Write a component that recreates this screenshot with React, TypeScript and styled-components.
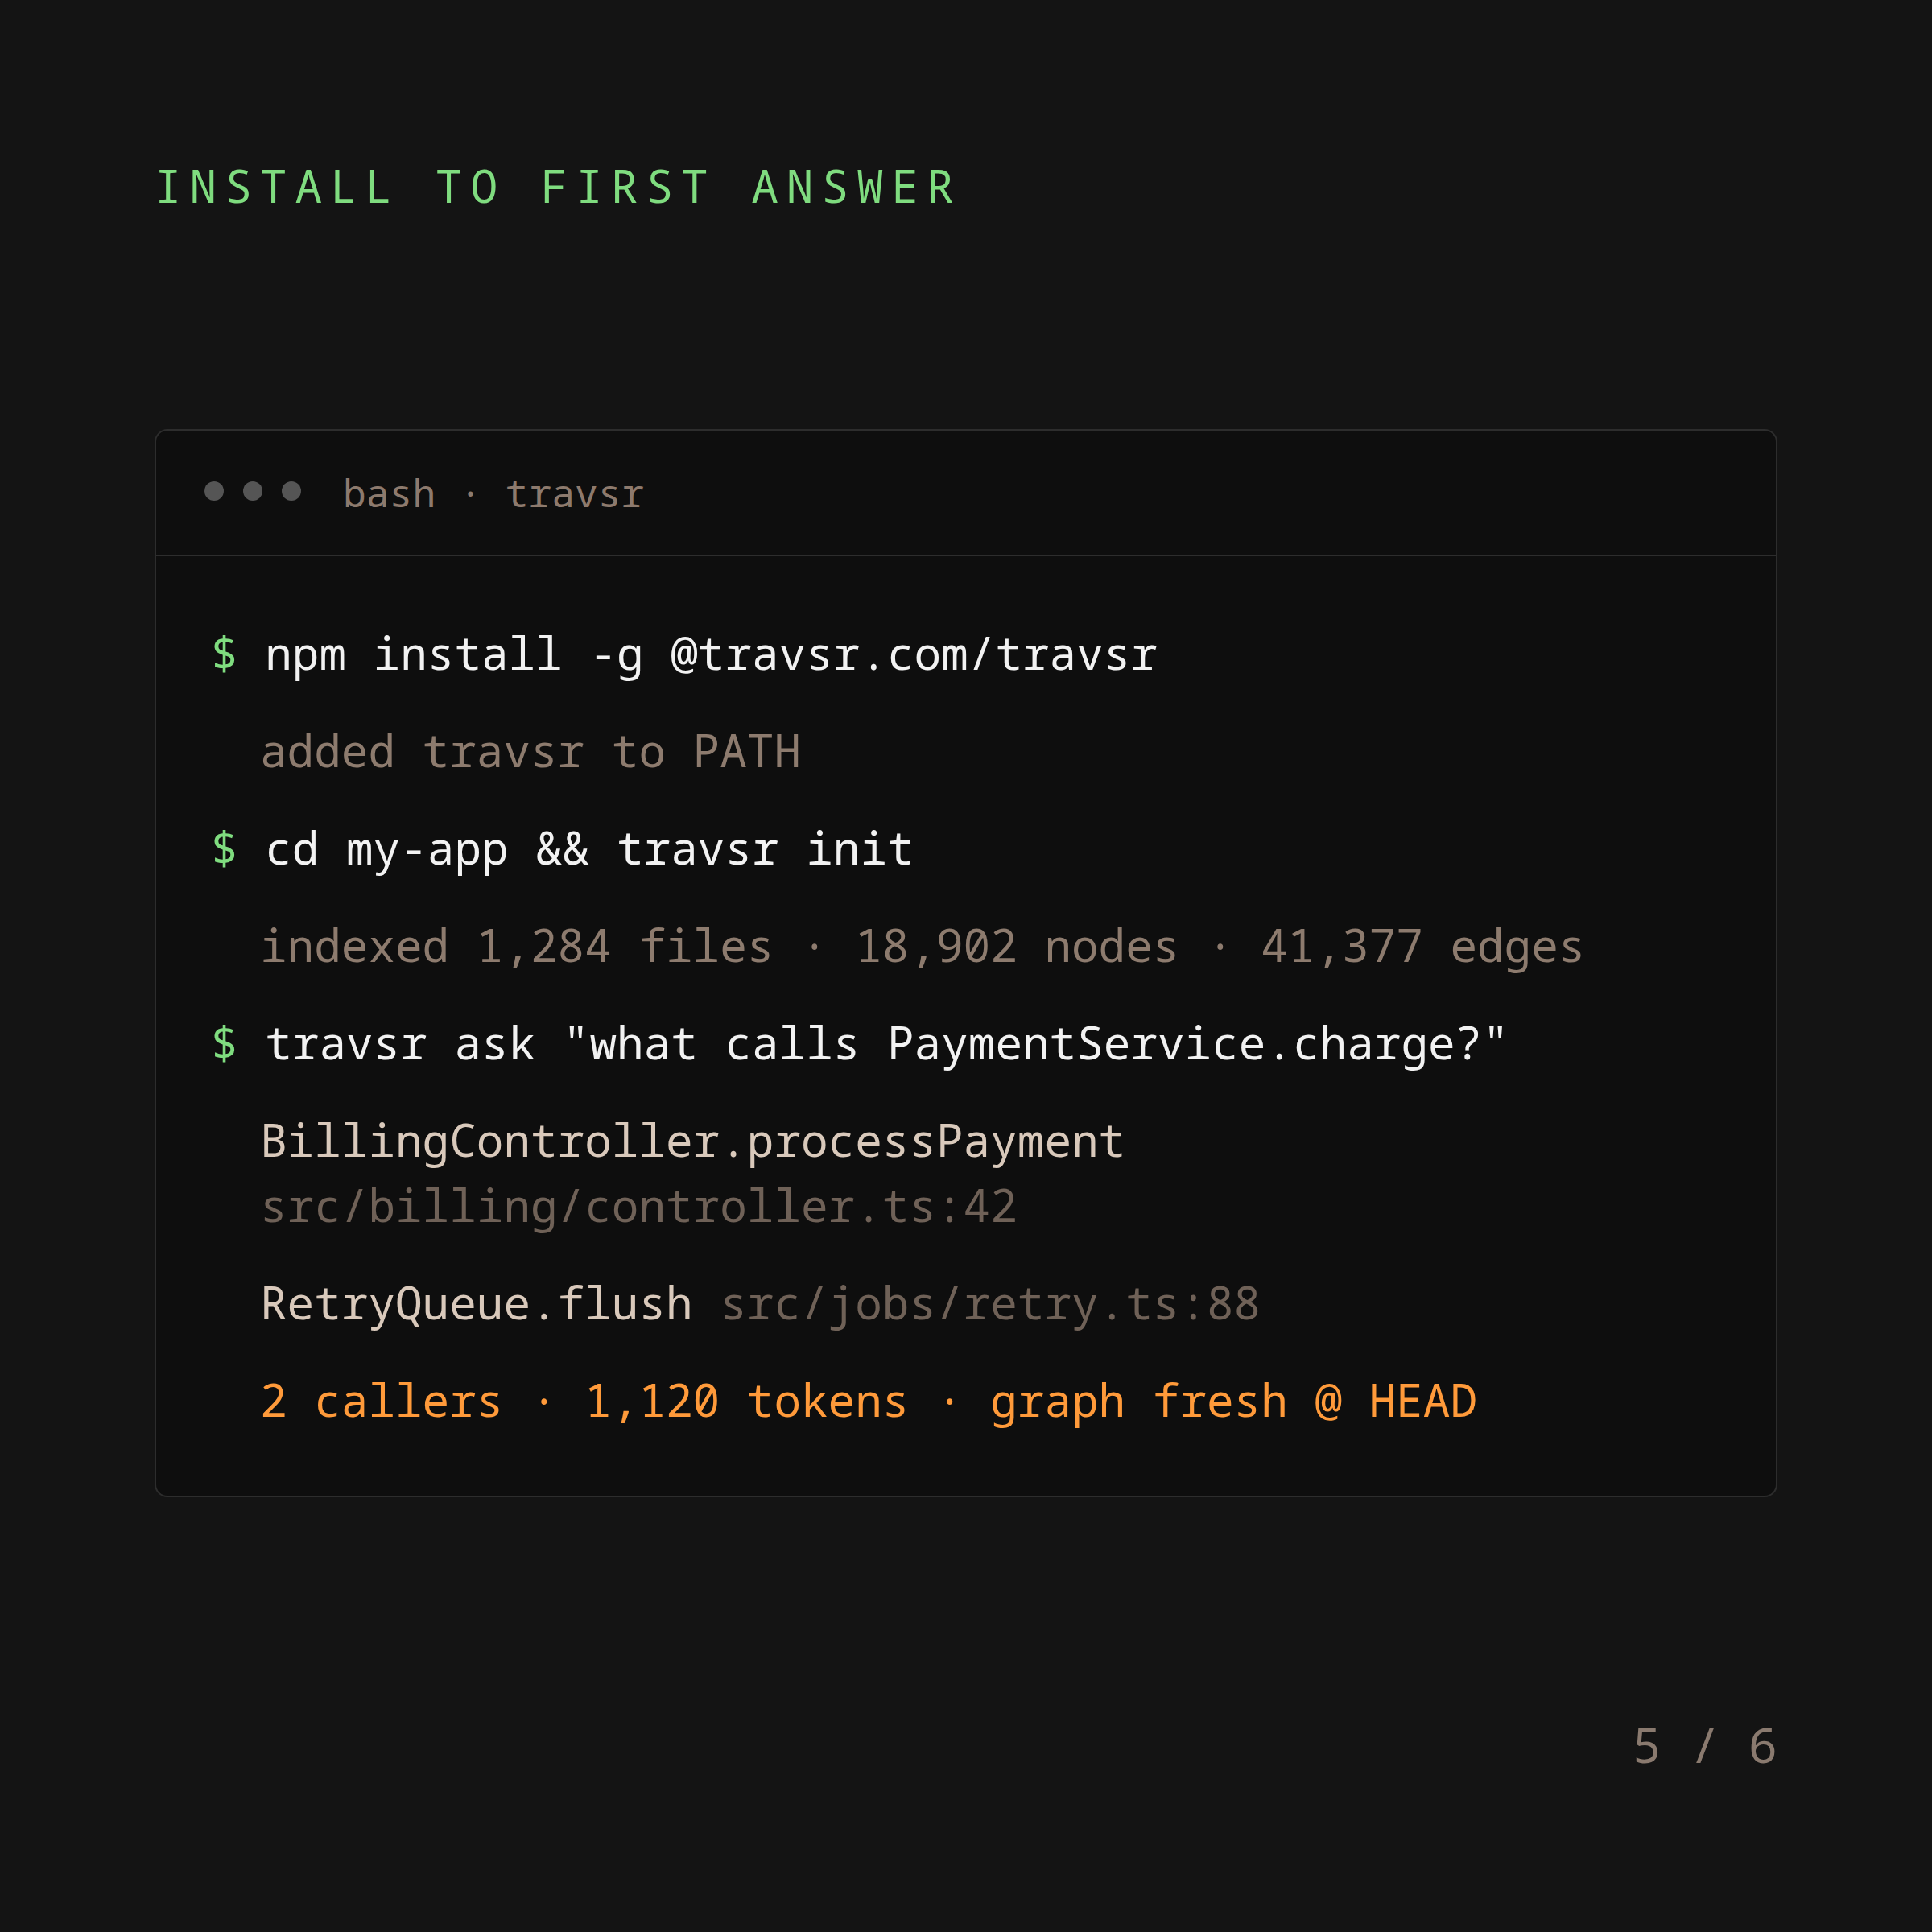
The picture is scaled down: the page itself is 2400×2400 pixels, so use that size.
import React from "react";
import styled, { createGlobalStyle } from "styled-components";

const GlobalStyle = createGlobalStyle`
  html, body {
    margin: 0;
    padding: 0;
    background: #141414;
  }
  * { box-sizing: border-box; }
`;

const mono = `"Noto Sans Mono", "DejaVu Sans Mono", "Liberation Mono", monospace`;

const Page = styled.main`
  width: 2400px;
  height: 2400px;
  padding: 200px 192px 0;
  display: flex;
  flex-direction: column;
  background: #141414;
  font-family: ${mono};
`;

const Title = styled.h1`
  margin: 0;
  font-family: ${mono};
  font-weight: 400;
  font-size: 56px;
  line-height: 60px;
  letter-spacing: 10px;
  color: #7fdc7f;
  white-space: pre;
`;

const Terminal = styled.section`
  margin-top: 273px;
  border: 2px solid #2d2d2d;
  border-radius: 16px;
  background: #0e0e0e;
  overflow: hidden;
`;

const Header = styled.div`
  height: 156px;
  display: flex;
  align-items: center;
  padding-left: 60px;
  border-bottom: 2px solid #2d2d2d;
`;

const Dots = styled.div`
  display: flex;
  gap: 24px;
  margin-top: -5px;
`;

const Dot = styled.span`
  width: 24px;
  height: 24px;
  border-radius: 50%;
  background: #555555;
`;

const HeaderLabel = styled.span`
  margin-left: 52px;
  font-size: 48px;
  line-height: 60px;
  color: #8d7a6d;
  white-space: pre;
`;

const Body = styled.div`
  padding: 79px 66px 79px 68px;
  display: flex;
  flex-direction: column;
  gap: 40px;
`;

const Line = styled.div`
  font-size: 56px;
  line-height: 81px;
  white-space: pre;
  color: #f2f2f2;
`;

const Prompt = styled.span`
  color: #7fdc7f;
`;

type Tone = "muted" | "bright" | "path" | "accent";

const toneColor: Record<Tone, string> = {
  muted: "#8d7b6e",
  bright: "#d9c9bb",
  path: "#6f6157",
  accent: "#ff9a3a",
};

const Output = styled.div<{ $tone?: Tone }>`
  padding-left: 61px;
  font-size: 56px;
  line-height: 81px;
  white-space: pre;
  color: ${(p) => toneColor[p.$tone ?? "muted"]};
`;

const Span = styled.span<{ $tone: Tone }>`
  color: ${(p) => toneColor[p.$tone]};
`;

const Footer = styled.div`
  margin-top: 277px;
  text-align: right;
  font-size: 60px;
  line-height: 60px;
  color: #8a7a6f;
  white-space: pre;
`;

export default function App() {
  return (
    <>
      <GlobalStyle />
      <Page>
        <Title>INSTALL TO FIRST ANSWER</Title>
        <Terminal>
          <Header>
            <Dots>
              <Dot />
              <Dot />
              <Dot />
            </Dots>
            <HeaderLabel>bash · travsr</HeaderLabel>
          </Header>
          <Body>
            <Line>
              <Prompt>$</Prompt> npm install -g @travsr.com/travsr
            </Line>
            <Output>added travsr to PATH</Output>
            <Line>
              <Prompt>$</Prompt> cd my-app &amp;&amp; travsr init
            </Line>
            <Output>indexed 1,284 files · 18,902 nodes · 41,377 edges</Output>
            <Line>
              <Prompt>$</Prompt> travsr ask "what calls PaymentService.charge?"
            </Line>
            <Output $tone="bright">
              BillingController.processPayment
              {"\n"}
              <Span $tone="path">src/billing/controller.ts:42</Span>
            </Output>
            <Output $tone="bright">
              RetryQueue.flush <Span $tone="path">src/jobs/retry.ts:88</Span>
            </Output>
            <Output $tone="accent">2 callers · 1,120 tokens · graph fresh @ HEAD</Output>
          </Body>
        </Terminal>
        <Footer>5 / 6</Footer>
      </Page>
    </>
  );
}
